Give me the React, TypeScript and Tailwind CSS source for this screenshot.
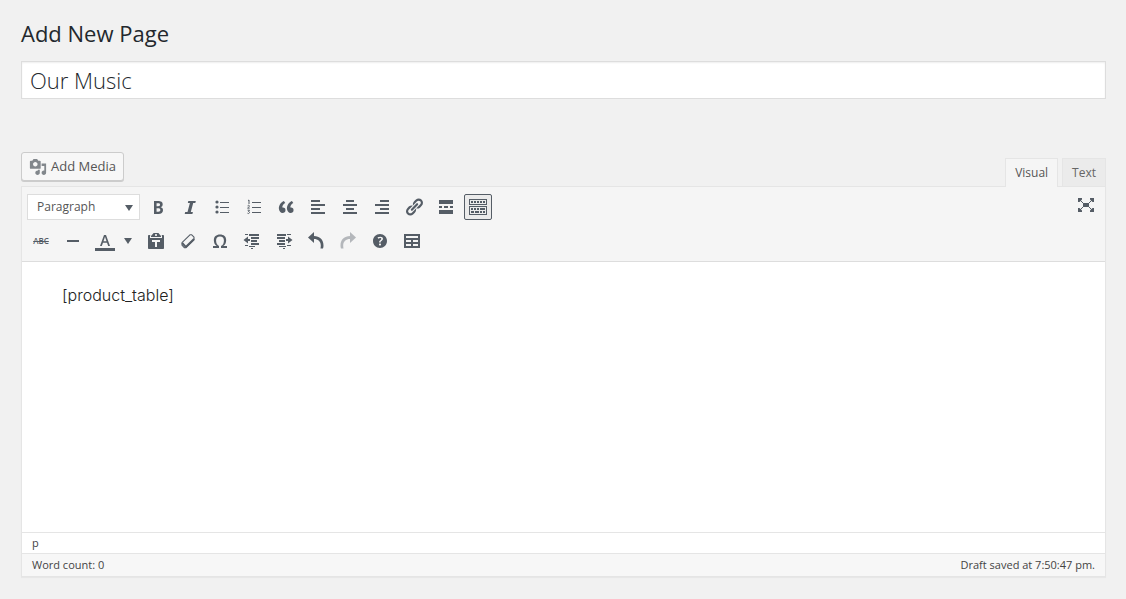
import React, { useState } from "react";

type IconProps = { children: React.ReactNode; className?: string };

function Icon({ children, className = "" }: IconProps) {
    return (
        <svg
            viewBox="0 0 20 20"
            width="20"
            height="20"
            fill="currentColor"
            aria-hidden="true"
            className={`shrink-0 ${className}`}
        >
            {children}
        </svg>
    );
}

const stroke = { fill: "none", stroke: "currentColor" };

const icons = {
    bold: (
        <path
            fillRule="evenodd"
            d="M6 4v13h4.54c1.37 0 2.46-.33 3.26-1 .8-.66 1.2-1.58 1.2-2.77 0-.84-.17-1.51-.51-2.01s-.9-.85-1.67-1.03v-.09c.57-.1 1.02-.4 1.36-.9s.51-1.13.51-1.91c0-1.14-.39-1.98-1.17-2.5C12.75 4.26 11.5 4 9.78 4H6zm2.57 5.15V6.26h1.36c.73 0 1.27.11 1.61.32.34.22.51.58.51 1.07 0 .54-.16.92-.47 1.15s-.82.35-1.51.35h-1.5zm0 2.19h1.6c1.44 0 2.16.53 2.16 1.61 0 .6-.17 1.05-.51 1.34s-.86.43-1.57.43H8.57v-3.38z"
        />
    ),
    italic: <path d="M15.8 4l-.5 2h-2.1l-2.4 9h2.1l-.5 2H4.7l.5-2h2.3l2.4-9H7.8l.5-2z" />,
    bullets: (
        <>
            <circle cx="5" cy="5" r="1.6" />
            <circle cx="5" cy="10" r="1.6" />
            <circle cx="5" cy="15" r="1.6" />
            <path d="M8 5h9v1H8zM8 10h9v1H8zM8 15h9v1H8z" />
        </>
    ),
    numbers: (
        <>
            <path d="M8 5h9v1H8zM8 10h9v1H8zM8 15h9v1H8z" />
            <path {...stroke} strokeWidth="1" d="M4 3.6l1-.6v4M3.6 8.800c.6-.8 2-.5 1.8.4 0 .5-1.2 1.200-1.8 1.900h2.100M3.600 13.200h1.900l-1 1.300c1.500 0 1.300 2-.1 2-.4 0-.7-.1-.9-.3" />
        </>
    ),
    quote: (
        <path d="M9.49 13.22c0-.74-.2-1.38-.61-1.9-.62-.78-1.83-.88-2.53-.72-.29-1.65 1.11-3.75 2.92-4.65L7.88 4c-2.73 1.3-5.42 4.28-4.96 8.05C3.21 14.43 4.59 16 6.54 16c.85 0 1.56-.25 2.12-.75s.83-1.18.83-2.03zm8.05 0c0-.74-.2-1.38-.61-1.9-.63-.78-1.83-.88-2.53-.72-.29-1.65 1.11-3.75 2.92-4.65L15.93 4c-2.73 1.3-5.41 4.28-4.95 8.05.29 2.38 1.66 3.95 3.61 3.95.85 0 1.56-.25 2.12-.75s.83-1.18.83-2.03z" />
    ),
    left: <path d="M12 5V3H3v2h9zm5 4V7H3v2h14zm-5 4v-2H3v2h9zm5 4v-2H3v2h14z" />,
    center: <path d="M14 5V3H6v2h8zm3 4V7H3v2h14zm-3 4v-2H6v2h8zm3 4v-2H3v2h14z" />,
    right: <path d="M17 5V3H8v2h9zm0 4V7H3v2h14zm0 4v-2H8v2h9zm0 4v-2H3v2h14z" />,
    link: (
        <path d="M17.74 2.76c1.68 1.69 1.68 4.41 0 6.1l-1.53 1.52c-1.12 1.12-2.7 1.47-4.14 1.09l2.62-2.61.76-.77.76-.76c.84-.84.84-2.2 0-3.04-.84-.85-2.2-.85-3.04 0l-.77.76-3.38 3.38c-.37-1.44-.02-3.02 1.1-4.14l1.52-1.53c1.69-1.68 4.42-1.68 6.1 0zM8.59 13.43l5.34-5.34c.42-.42.42-1.1 0-1.52-.44-.43-1.13-.39-1.53 0l-5.33 5.34c-.42.42-.42 1.1 0 1.52.44.43 1.13.39 1.52 0zm-.76 2.29l4.14-4.15c.38 1.44.03 3.02-1.09 4.14l-1.52 1.53c-1.69 1.68-4.41 1.68-6.1 0-1.68-1.68-1.68-4.42 0-6.1l1.53-1.52c1.12-1.12 2.7-1.47 4.14-1.1l-4.14 4.15c-.85.84-.85 2.2 0 3.05.84.84 2.2.84 3.04 0z" />
    ),
    more: <path d="M17 7V3H3v4h14zM6 11V9H3v2h3zm6 0V9H8v2h4zm5 0V9h-3v2h3zm0 6v-4H3v4h14z" />,
    kitchen: (
        <path
            fillRule="evenodd"
            d="M19 2v6H1V2h18zm-1 5V3H2v4h16zM5 4v2H3V4h2zm3 0v2H6V4h2zm3 0v2H9V4h2zm3 0v2h-2V4h2zm3 0v2h-2V4h2zm2 5v9H1V9h18zm-1 8v-7H2v7h16zM5 11v2H3v-2h2zm3 0v2H6v-2h2zm3 0v2H9v-2h2zm6 0v2h-5v-2h5zm-11 3v2H3v-2h3zm5 0v2H7v-2h4zm3 0v2h-2v-2h2zm3 0v2h-2v-2h2z"
        />
    ),
    rule: <path d="M4 9h12v2H4z" />,
    paste: (
        <path
            fillRule="evenodd"
            d="M12.38 2L15 5v1H5V5l2.64-3h4.74zM10 5c.55 0 1-.44 1-1s-.45-1-1-1-1 .44-1 1 .45 1 1 1zm5.45-1H17c.55 0 1 .45 1 1v12c0 .56-.45 1-1 1H3c-.55 0-1-.44-1-1V5c0-.55.45-1 1-1h1.55L4 4.63V7h12V4.63zM14 11V9H6v2h3v5h2v-5h3z"
        />
    ),
    eraser: (
        <>
            <path {...stroke} strokeWidth="1.1" strokeLinejoin="round" d="M12.2 3.7L4 11.7v2.5l2.5 2.6h1.3l8.2-8V6.2l-2.5-2.5z" />
            <path {...stroke} strokeWidth="1.9" d="M4.2 12l3.3 3.6v1.2M7.8 16l8.2-8" />
        </>
    ),
    omega: (
        <path
            fillRule="evenodd"
            d="M10 5.4c1.27 0 2.24.36 2.91 1.08.66.71 1 1.76 1 3.13 0 1.28-.23 2.37-.69 3.27-.47.89-1.27 1.52-2.22 2.12v2h6v-2h-3.69c.92-.64 1.62-1.34 2.12-2.34.49-1.01.74-2.13.74-3.35 0-1.78-.55-3.19-1.65-4.22S11.92 3.54 10 3.54s-3.43.53-4.52 1.57C4.38 6.15 3.84 7.54 3.84 9.3c0 1.22.24 2.34.73 3.36s1.2 1.7 2.12 2.34H3v2h6v-2c-.98-.64-1.8-1.28-2.24-2.17-.45-.89-.67-1.96-.67-3.22 0-1.37.33-2.41 1-3.13C7.75 5.76 8.72 5.4 10 5.4z"
        />
    ),
    outdent: (
        <path d="M7 3h10v2H7zM3 3h3v1H3zM9 6h8v2H9zM9 9h6v2H9zM9 12h8v2H9zM3 14h3v1H3zM7 15h6v1H7zM9 17h2v1H9zM6 5.5V8h2v2H6v2.5L1.500 9z" />
    ),
    indent: (
        <path d="M3 3h9v2H3zM13 3h4v1h-4zM3 6h8v2H3zM5 9h6v2H5zM3 12h8v2H3zM5 15h7v1H5zM13 14h4v1h-4zM9 17h2v1H9zM14 5.500l4.500 3.500-4.500 3.500V10h-2V8h2z" />
    ),
    undo: <path d="M8 1v4c5.5 0 9.5 3.5 9.5 9.5 0 1-.1 2-.5 3h-2.5c.2-1 .3-2 .3-3C14.8 10.5 12 8 8 8v4L2 6.5z" />,
    redo: <path d="M12 1v4c-5.5 0-9.5 3.5-9.5 9.5 0 1 .1 2 .5 3h2.5c-.2-1-.3-2-.3-3C5.2 10.5 8 8 12 8v4l6-5.5z" />,
    help: (
        <path
            fillRule="evenodd"
            d="M17 10c0-3.87-3.14-7-7-7-3.87 0-7 3.13-7 7s3.13 7 7 7c3.86 0 7-3.13 7-7zm-6.3 1.48H9.14v-.43c0-.38.08-.7.24-.98s.46-.57.88-.89c.41-.29.68-.53.81-.71.14-.18.2-.39.2-.62 0-.25-.09-.44-.28-.58-.19-.13-.45-.19-.79-.19-.58 0-1.25.19-2 .57l-.64-1.28c.87-.49 1.8-.74 2.77-.74.81 0 1.45.2 1.92.58.48.39.71.91.71 1.55 0 .43-.09.8-.29 1.11-.19.32-.57.67-1.11 1.06-.38.28-.61.49-.71.63-.1.15-.15.34-.15.57v.35zm-1.47 2.74c-.18-.17-.27-.42-.27-.73 0-.33.08-.58.26-.75s.43-.25.77-.25c.32 0 .57.09.75.26s.27.42.27.74c0 .3-.09.55-.27.72-.18.18-.43.27-.75.27-.33 0-.58-.09-.76-.26z"
        />
    ),
    table: <path fillRule="evenodd" d="M18 17V3H2v14h16zM16 7H4V5h12v2zm-7 4H4V9h5v2zm7 0h-5V9h5v2zm-7 4H4v-2h5v2zm7 0h-5v-2h5v2z" />,
    fullscreen: (
        <>
            <path d="M7 6h6v4H7zM2 1h4v1.5L3.5 5H2zM14 1h4v4h-1.5L14 2.5zM2 11h1.5L6 13.5V15H2zM16.5 11H18v4h-4v-1.5z" />
            <path {...stroke} strokeWidth="1" d="M3.5 2.5l4 4M16.5 2.5l-4 4M3.5 13.5l4-4M16.5 13.5l-4-4" />
        </>
    ),
    media: (
        <path
            fillRule="evenodd"
            d="M13 11V4c0-.55-.45-1-1-1h-1.67L9 1H5L3.67 3H2c-.55 0-1 .45-1 1v7c0 .55.45 1 1 1h10c.55 0 1-.45 1-1zM7 4.5c1.38 0 2.5 1.12 2.5 2.5S8.38 9.5 7 9.5 4.5 8.38 4.5 7 5.62 4.5 7 4.5zM14 6h5v10.5c0 1.38-1.12 2.5-2.5 2.5S14 17.88 14 16.5s1.12-2.5 2.5-2.5c.17 0 .34.02.5.05V9h-3V6zm-4 8.05V13h2v3.5c0 1.38-1.12 2.5-2.5 2.5S7 17.88 7 16.5 8.12 14 9.5 14c.17 0 .34.02.5.05z"
        />
    ),
};

type ToolProps = {
    label: string;
    active?: boolean;
    disabled?: boolean;
    onClick?: () => void;
    children: React.ReactNode;
};

function ToolButton({ label, active, disabled, onClick, children }: ToolProps) {
    return (
        <button
            type="button"
            title={label}
            aria-label={label}
            disabled={disabled}
            onClick={onClick}
            className={`flex h-[26px] w-7 items-center justify-center rounded-[2px] border text-[#555d66] disabled:opacity-40 ${
                active ? "border-[#555d66] bg-[#ebebeb]" : "border-transparent"
            }`}
        >
            {children}
        </button>
    );
}

function TextColorButton() {
    return (
        <div className="flex h-[26px] w-[47px] items-center text-[#555d66]">
            <button type="button" aria-label="Text color" className="flex h-full w-7 items-center justify-center">
                <Icon>
                    <path d="M0 17h20v3H0z" />
                    <path fillRule="evenodd" d="M9 4h2l4 11h-1.8l-1.2-3.3H8L6.8 15H5zM8.5 10.2h3L10 5.8z" />
                </Icon>
            </button>
            <button type="button" aria-label="Choose text color" className="flex h-full w-[18px] items-center justify-center">
                <svg width="8" height="6" viewBox="0 0 8 6" fill="currentColor" aria-hidden="true">
                    <path d="M0 0h8L4 6z" />
                </svg>
            </button>
        </div>
    );
}

export default function App() {
    const [title, setTitle] = useState("Our Music");
    const [content, setContent] = useState("[product_table]");
    const [showMore, setShowMore] = useState(true);

    return (
        <main className="min-h-screen bg-[#f1f1f1] px-5 pt-5 pb-5 font-['Open_Sans','Noto_Sans',sans-serif] text-[#444]">
            <h1 className="pl-px text-[22px] leading-[27px] text-[#23282d]">Add New Page</h1>

            <div className="mt-3.5 pl-px">
                <input
                    type="text"
                    aria-label="Title"
                    value={title}
                    onChange={(e) => setTitle(e.target.value)}
                    className="block h-[38px] w-full border border-[#ddd] bg-white px-2 text-[22px] font-light text-[#23282d] shadow-[inset_0_1px_2px_rgba(0,0,0,0.07)] outline-none"
                />
            </div>

            <div className="mt-[53px] flex items-start justify-between pl-px">
                <button
                    type="button"
                    className="flex h-[29px] items-center gap-1 rounded-[3px] border border-[#ccc] bg-[#f7f7f7] px-[7px] text-[13px] text-[#555] shadow-[0_1px_0_#ccc]"
                >
                    <Icon className="h-[18px] w-[18px] text-[#82878c]">{icons.media}</Icon>
                    Add Media
                </button>

                {/* Active tab overlaps the panel border */}
                <div className="relative -mb-px flex gap-1 self-end pt-1.5">
                    <button type="button" className="h-[29px] border border-b-0 border-[#e5e5e5] bg-[#f5f5f5] px-[9px] text-[12px] text-[#555]">
                        Visual
                    </button>
                    <button type="button" className="h-[29px] border border-[#e5e5e5] bg-[#ebebeb] px-[9px] text-[12px] text-[#666]">
                        Text
                    </button>
                </div>
            </div>

            <section className="ml-px border border-[#e5e5e5] bg-white shadow-[0_1px_1px_rgba(0,0,0,0.04)]">
                <div className="flex items-start justify-between border-b border-[#ddd] bg-[#f5f5f5] px-[5px] py-[7px]">
                    <div className="flex flex-col gap-2">
                        <div className="flex gap-1">
                            <div className="relative">
                                <select
                                    aria-label="Block format"
                                    className="block h-[26px] w-[113px] appearance-none border border-[#ddd] bg-white pl-[9px] text-[12px] text-[#555] outline-none"
                                >
                                    <option>Paragraph</option>
                                    <option>Heading 1</option>
                                    <option>Heading 2</option>
                                    <option>Preformatted</option>
                                </select>
                                <svg
                                    width="8"
                                    height="6"
                                    viewBox="0 0 8 6"
                                    aria-hidden="true"
                                    className="pointer-events-none absolute top-[11px] right-[7px] text-[#555d66]"
                                >
                                    <path d="M0 0h8L4 6z" fill="currentColor" />
                                </svg>
                            </div>
                            <ToolButton label="Bold"><Icon>{icons.bold}</Icon></ToolButton>
                            <ToolButton label="Italic"><Icon>{icons.italic}</Icon></ToolButton>
                            <ToolButton label="Bulleted list"><Icon>{icons.bullets}</Icon></ToolButton>
                            <ToolButton label="Numbered list"><Icon>{icons.numbers}</Icon></ToolButton>
                            <ToolButton label="Blockquote"><Icon>{icons.quote}</Icon></ToolButton>
                            <ToolButton label="Align left"><Icon>{icons.left}</Icon></ToolButton>
                            <ToolButton label="Align center"><Icon>{icons.center}</Icon></ToolButton>
                            <ToolButton label="Align right"><Icon>{icons.right}</Icon></ToolButton>
                            <ToolButton label="Insert/edit link"><Icon>{icons.link}</Icon></ToolButton>
                            <ToolButton label="Insert Read More tag"><Icon>{icons.more}</Icon></ToolButton>
                            <ToolButton label="Toolbar Toggle" active={showMore} onClick={() => setShowMore(!showMore)}>
                                <Icon>{icons.kitchen}</Icon>
                            </ToolButton>
                        </div>

                        {showMore && (
                            <div className="flex gap-1">
                                <ToolButton label="Strikethrough">
                                    <span className="text-[8px] leading-none font-semibold line-through">ABC</span>
                                </ToolButton>
                                <ToolButton label="Horizontal line"><Icon>{icons.rule}</Icon></ToolButton>
                                <TextColorButton />
                                <ToolButton label="Paste as text"><Icon>{icons.paste}</Icon></ToolButton>
                                <ToolButton label="Clear formatting"><Icon>{icons.eraser}</Icon></ToolButton>
                                <ToolButton label="Special character"><Icon>{icons.omega}</Icon></ToolButton>
                                <ToolButton label="Decrease indent"><Icon>{icons.outdent}</Icon></ToolButton>
                                <ToolButton label="Increase indent"><Icon>{icons.indent}</Icon></ToolButton>
                                <ToolButton label="Undo"><Icon>{icons.undo}</Icon></ToolButton>
                                <ToolButton label="Redo" disabled><Icon>{icons.redo}</Icon></ToolButton>
                                <ToolButton label="Keyboard Shortcuts"><Icon>{icons.help}</Icon></ToolButton>
                                <ToolButton label="Table"><Icon>{icons.table}</Icon></ToolButton>
                            </div>
                        )}
                    </div>
                    <ToolButton label="Distraction-free writing mode"><Icon>{icons.fullscreen}</Icon></ToolButton>
                </div>

                <textarea
                    aria-label="Page content"
                    value={content}
                    onChange={(e) => setContent(e.target.value)}
                    className="block h-[270px] w-full resize-none px-10 py-5 font-[Inter,sans-serif] text-[16px] leading-[27px] font-light text-[#222] outline-none"
                />

                <div className="border-t border-[#e5e5e5] px-2.5 text-[11px] leading-5">p</div>
                <div className="flex justify-between border-t border-[#e5e5e5] bg-[#f7f7f7] px-2.5 text-[11px] leading-[22px]">
                    <span>Word count: 0</span>
                    <span>Draft saved at 7:50:47 pm.</span>
                </div>
            </section>
        </main>
    );
}
